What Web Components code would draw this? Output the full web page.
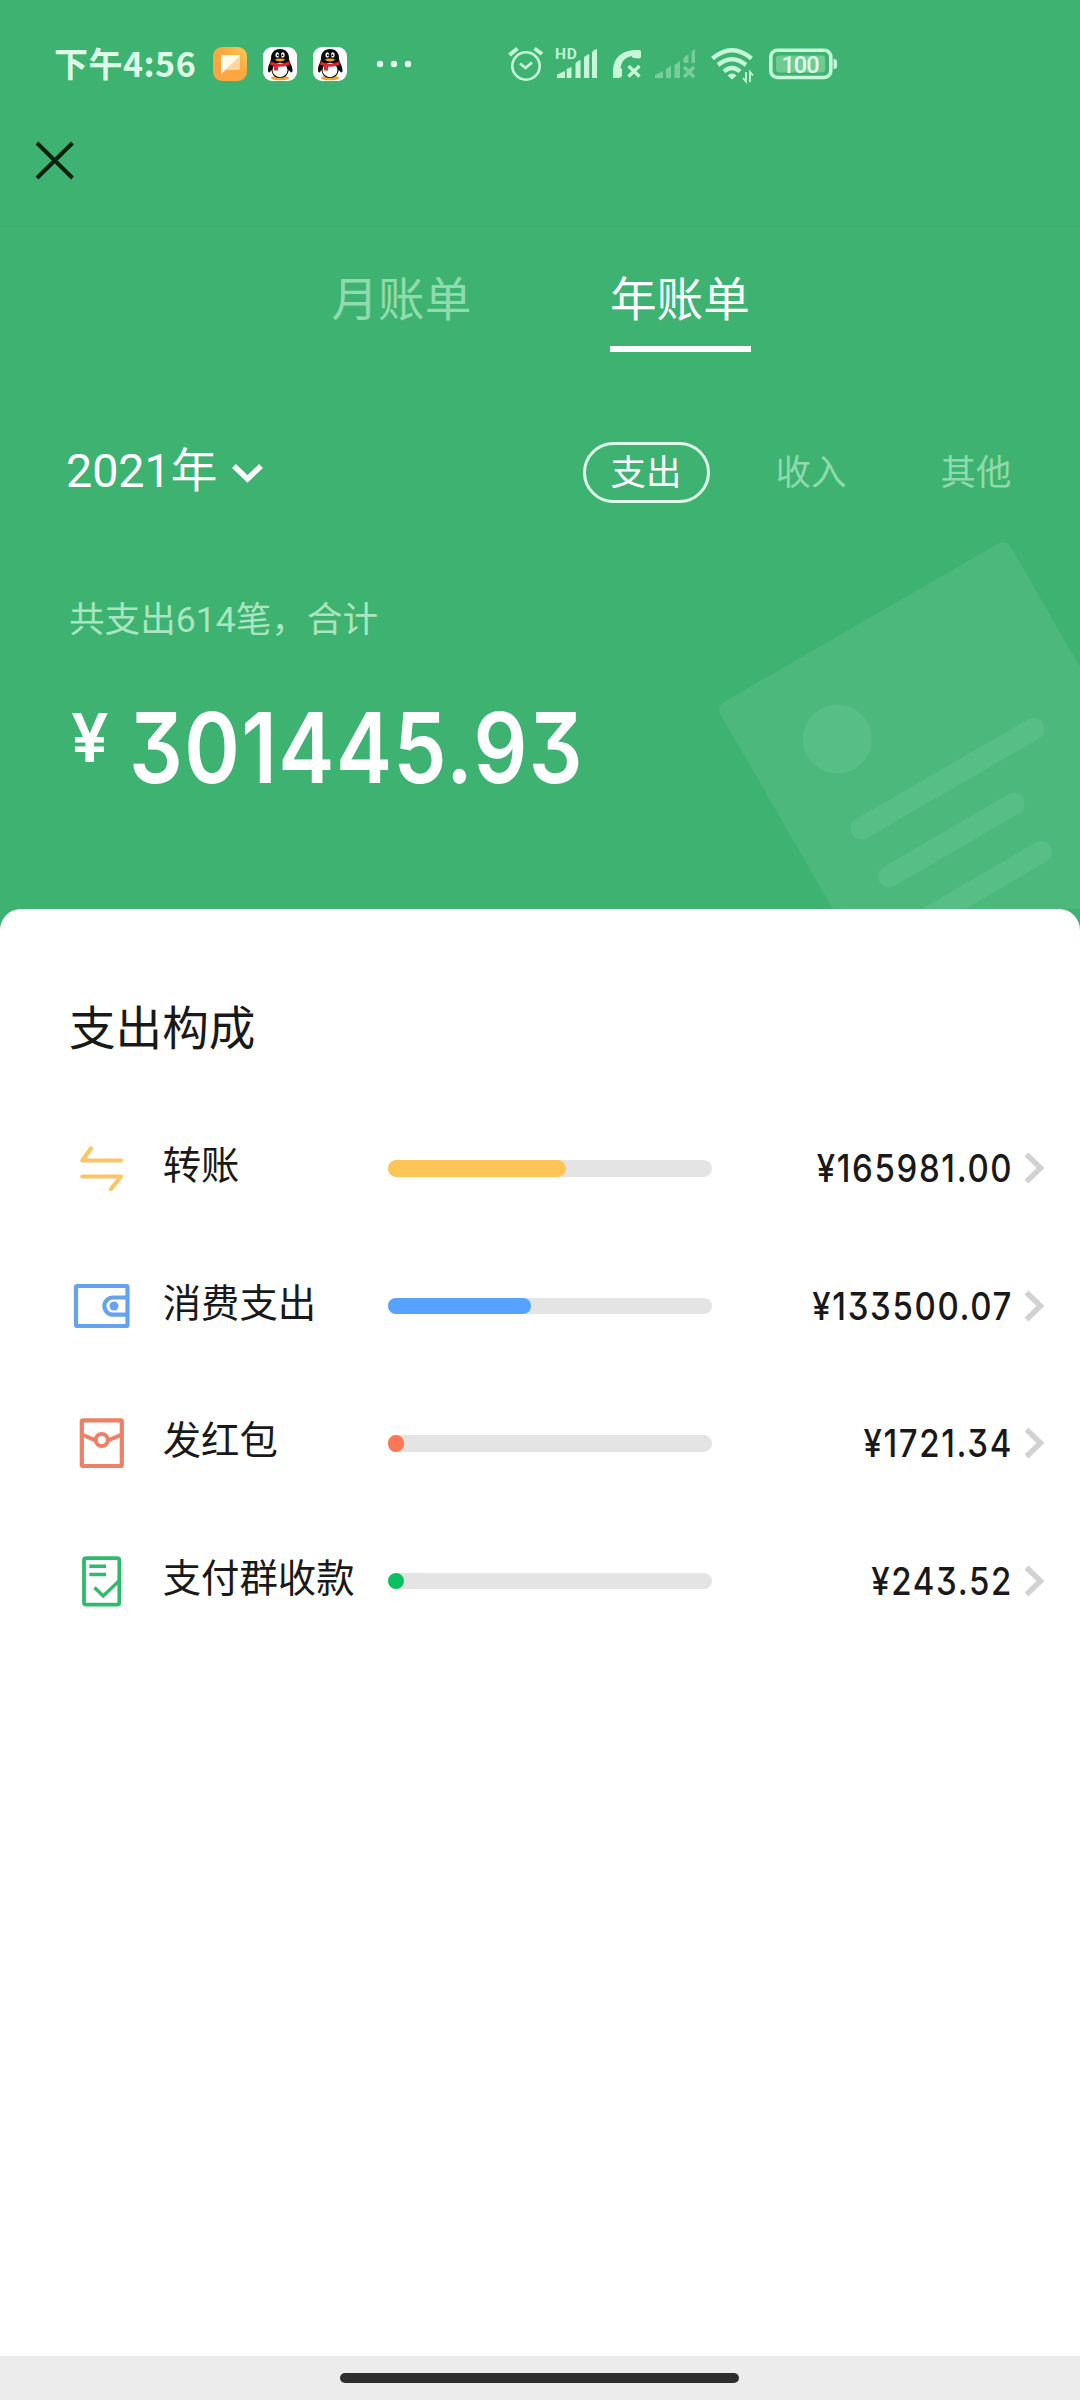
<!DOCTYPE html>
<html lang="zh-CN">
<head>
<meta charset="utf-8">
<title>年账单</title>
<style>
  html, body { margin: 0; padding: 0; }
  body { width: 1080px; height: 2400px; background: #fff; overflow: hidden;
    font-family: Roboto, "Noto Sans CJK SC", sans-serif; }
</style>
</head>
<body>
<bill-app></bill-app>

<template id="bill-app">
  <style>
    :host { display: flex; flex-direction: column; width: 1080px; height: 2400px; background: #3eb371; }
    .hero { position: relative; overflow: hidden; flex: none; height: 682px; display: flex; flex-direction: column; }
    .mark { position: absolute; left: 0; top: 0; z-index: 0; }
    .tabs { display: flex; justify-content: center; gap: 138px; padding: 41px 0 0; margin-left: 2px; }
    .filters { display: flex; align-items: center; margin-top: 90px; padding: 0 66px; height: 61px; }
    .pills { display: flex; margin-left: auto; }
    .summary { margin: 85px 0 0 69px; height: 64px; line-height: 64px; font-size: 35.600px; color: #a9e5c0; }
    .sheet { flex: 1; background: #fff; border-radius: 21px 21px 0 0; padding: 88px 35px 0 69px; }
    h2 { margin: 0 0 38.500px; font-weight: 400; font-size: 46.6px; line-height: 64px; color: #191919; }
  </style>
  <status-bar></status-bar>
  <nav-bar></nav-bar>
  <section class="hero">
    <svg class="mark" width="1080" height="682" viewBox="0 227 1080 682">
      <rect transform="translate(716 706.500) rotate(-30)" width="335" height="420" rx="9" fill="#4cb87b"/>
      <circle cx="837.3" cy="739" r="34.5" fill="#57be85"/>
      <path d="M861.5 828.5L1033.5 729M889 876.500L1013.500 804M917 924.500L1041 852" stroke="#57be85" stroke-width="22" stroke-linecap="round"/>
    </svg>
    <div class="tabs">
      <bill-tab>月账单</bill-tab>
      <bill-tab active>年账单</bill-tab>
    </div>
    <div class="filters">
      <year-picker>2021年</year-picker>
      <div class="pills">
        <type-pill active>支出</type-pill>
        <type-pill>收入</type-pill>
        <type-pill>其他</type-pill>
      </div>
    </div>
    <div class="summary">共支出614笔，合计</div>
    <total-amount>301445.93</total-amount>
  </section>
  <section class="sheet">
    <h2>支出构成</h2>
    <bill-row icon="transfer" fill="178.5" color="#fdc555">转账<span slot="amount">¥165981.00</span></bill-row>
    <bill-row icon="wallet" fill="143" color="#56a2ff">消费支出<span slot="amount">¥133500.07</span></bill-row>
    <bill-row icon="packet" fill="16.5" color="#fb7758">发红包<span slot="amount">¥1721.34</span></bill-row>
    <bill-row icon="group" fill="16.5" color="#09c160">支付群收款<span slot="amount">¥243.52</span></bill-row>
  </section>
  <home-indicator></home-indicator>
</template>

<template id="status-bar">
  <style>
    :host { display: flex; height: 84px; padding: 44px 0 0 54px; box-sizing: border-box; color: #dcfce8; }
    .time { width: 159px; height: 40px; margin-top: -1px; font: 700 34px/40px "Noto Sans CJK SC", sans-serif; letter-spacing: .5px; white-space: nowrap; }
    svg { flex: none; display: block; }
    text { font-family: Roboto, sans-serif; }
  </style>
  <div class="time">下午4:56</div>
  <svg width="50" height="40" viewBox="0 0 50 40">
    <defs><linearGradient id="o" x1="0" y1="1" x2="1" y2="0"><stop stop-color="#ffa245"/><stop offset=".6" stop-color="#fda941"/><stop offset="1" stop-color="#f6cf55"/></linearGradient></defs>
    <rect y="3" width="34" height="34" rx="9" fill="url(#o)"/>
    <path d="M8 11H27V13L8 30Z" fill="#fffbe9"/><path d="M27 12V24Q27 26 25 26H13Z" fill="#ffd49a"/>
  </svg>
  <qq-icon></qq-icon>
  <qq-icon></qq-icon>
  <svg width="145" height="40" viewBox="363 44 145 40" fill="#e4fff0"><circle cx="380" cy="64" r="3.2"/><circle cx="394" cy="64" r="3.2"/><circle cx="408" cy="64" r="3.2"/></svg>
  <svg width="47" height="40" viewBox="508 44 47 40" fill="none" stroke="#c5f7d8" stroke-width="2.6">
    <circle cx="526" cy="66" r="13.700"/><path d="M520 63.500L525.500 68L532 62.500" stroke-width="2.700"/><path d="M509.500 55L517.500 48.500M542 54L534.500 48.500" stroke-width="4"/>
  </svg>
  <svg width="58" height="40" viewBox="555 44 58 40" fill="#c5f7d8">
    <path d="M557 78V74.500L565 71V78ZM566.700 78V69L571.500 67V78ZM575.500 78V64Q575.500 62 580.500 60V78ZM584 78V58Q584 56 589.200 54V78ZM592 78V53Q592 50 597 49V78Z"/>
    <text x="555" y="59" font-size="15.500" font-weight="600" letter-spacing=".8">HD</text>
  </svg>
  <svg width="42" height="40" viewBox="613 44 42 40" fill="#c5f7d8">
    <path d="M613 78V70Q614 52 634 50H639Q641 50 641 52V56.500Q641 58.500 639 58.500L634 58Q632 58 631.500 56Q622 58 620.500 67.500L622 69V76Q621 78.500 617 78Z"/>
    <path d="M628.500 66L639.500 76.500M639.500 66L628.500 76.500" stroke="#c5f7d8" stroke-width="3.300"/>
  </svg>
  <svg width="56" height="40" viewBox="655 44 56 40" fill="#79cd9a">
    <path d="M655 78V75L663 71V78ZM666 78V69L671 66V78ZM674.500 78V65L680 61V78ZM683.500 63V58L688.500 54V63ZM691.500 63V52L695 49V63Z"/>
    <path d="M684 67L694 77M694 67L684 77" stroke="#79cd9a" stroke-width="3.500"/>
  </svg>
  <svg width="58" height="40" viewBox="711 44 58 40" fill="none" stroke="#c5f7d8" stroke-width="4.300">
    <path d="M712.500 58.500Q732 42 751.500 58.500"/><path d="M718 65Q732 53.500 746 65"/><path d="M724 71.500Q732 64.500 740 71.500"/>
    <path d="M732 79.500L727.500 75.500Q732 71.500 736.500 75.500Z" fill="#c5f7d8" stroke="none"/>
    <path d="M746 72V81.500L743 78M750 82V72L753 75.500" stroke-width="1.800"/>
  </svg>
  <svg width="70" height="40" viewBox="769 44 70 40">
    <rect x="770.800" y="50.300" width="60" height="27.200" rx="6.500" fill="none" stroke="#c5f7d8" stroke-width="3.600"/>
    <rect x="776" y="55.500" width="49" height="17" rx="3" fill="#6fca93"/>
    <path d="M833.500 59Q837 59 837 61.500V66.500Q837 69 833.500 69Z" fill="#c5f7d8"/>
    <text x="800.500" y="72.800" font-size="23.500" font-weight="500" text-anchor="middle" fill="#dcffe9" textLength="38">100</text>
  </svg>
</template>

<template id="qq-icon">
  <style>:host { display: block; width: 50px; height: 40px; } svg { display: block; }</style>
  <svg width="50" height="40" viewBox="0 0 50 40">
    <rect y="3" width="34" height="34" rx="9" fill="#fff"/>
    <ellipse cx="17" cy="34" rx="9" ry="2.300" fill="#f0a52c"/>
    <path d="M17 5C11 5 8 9 8 14C8 18 5 21 5 26Q5 29 6.500 28.500L8.500 26C9 31 12 34 17 34S25 31 25.800 26L28 28.500Q30 28 29.500 25.500C29 21 26 18 26 14C26 9 23 5 17 5Z" fill="#0b0b0d"/>
    <ellipse cx="17" cy="26" rx="7.500" ry="7.200" fill="#fff"/>
    <path d="M8 17.500Q17 22 26 17.500L27 20.500Q21 23.500 15 22.700V26.500H11V22L7 20.500Z" fill="#e3262e"/>
    <ellipse cx="14.300" cy="11" rx="1.900" ry="2.700" fill="#fff"/><ellipse cx="19.800" cy="11" rx="1.900" ry="2.700" fill="#fff"/>
    <circle cx="14.800" cy="11.300" r="1" fill="#000"/><circle cx="19.400" cy="11.300" r="1" fill="#000"/>
    <path d="M11.500 15.800Q17 13 22.500 15.800Q17 19 11.500 15.800Z" fill="#f6a61d"/>
  </svg>
</template>

<template id="nav-bar">
  <style>:host { display: flex; height: 143px; box-sizing: border-box; padding: 57px 0 0 34.500px; border-bottom: 1px solid #3cae6c; }</style>
  <svg width="40" height="40" viewBox="0 0 40 40"><path d="M2 2L37.500 37M37.500 2L2 37" stroke="#04200f" stroke-width="4"/></svg>
</template>

<template id="bill-tab">
  <style>
    :host { display: block; width: 140.500px; height: 84px; box-sizing: border-box; font-size: 46.600px; line-height: 64px; color: #90dbae; white-space: nowrap; z-index: 1; }
    :host([active]) { color: #fff; border-bottom: 6px solid #fff; }
  </style>
  <slot></slot>
</template>

<template id="year-picker">
  <style>:host { display: flex; align-items: center; gap: 14px; font-size: 46.600px; line-height: 61px; color: #fff; z-index: 1; } span { padding-bottom: 3px; }</style>
  <span><slot></slot></span>
  <svg width="34" height="24" viewBox="0 0 34 24"><path d="M3 5L16.500 18L30 5" fill="none" stroke="#fff" stroke-width="5.500"/></svg>
</template>

<template id="type-pill">
  <style>
    :host { display: block; box-sizing: border-box; width: 127px; height: 61px; margin-right: 38px; border: 3px solid transparent; border-radius: 31px;
      font-size: 35.400px; line-height: 56px; text-align: center; color: #8edaac; }
    :host([active]) { border-color: #dffcea; color: #fff; }
    :host(:last-child) { margin-right: -25.500px; }
  </style>
  <slot></slot>
</template>

<template id="total-amount">
  <style>
    :host { display: flex; align-items: flex-start; margin: 47px 0 0 71px; color: #fff; font-family: Inter, sans-serif; font-weight: 600; font-feature-settings: "cv09" 1; z-index: 1; }
    span { transform: scaleX(.86); transform-origin: left; white-space: nowrap; }
    .sign { font-size: 68px; line-height: 68px; width: 57.500px; margin-top: 4px; font-weight: 600; transform: scaleX(.98); }
    .num { font-size: 98px; line-height: 98px; letter-spacing: 1.700px; }
  </style>
  <span class="sign">¥</span><span class="num"><slot></slot></span>
</template>

<template id="bill-row">
  <style>
    :host { display: flex; align-items: center; height: 137.500px; color: #191919; }
    .icon { width: 60px; height: 60px; margin-left: 2.700px; flex: none; }
    .label { width: 225px; margin-left: 31px; font-size: 38.400px; line-height: 52px; padding-bottom: 4px; white-space: nowrap; }
    .bar { width: 324px; height: 16.500px; border-radius: 9px; background: #e4e4e4; flex: none; }
    .fill { height: 100%; border-radius: 9px; }
    .amount { margin-left: auto; padding-top: 2px; font: 500 37.500px/50px Inter, sans-serif; font-feature-settings: "cv09" 1; letter-spacing: 1.850px; white-space: nowrap; transform: scaleX(.88); transform-origin: right; }
    .chev { margin: 0 -1px 0 11px; flex: none; }
  </style>
  <svg class="icon" viewBox="0 0 60 60" fill="none"></svg>
  <div class="label"><slot></slot></div>
  <div class="bar"><div class="fill"></div></div>
  <div class="amount"><slot name="amount"></slot></div>
  <svg class="chev" width="22" height="34" viewBox="0 0 22 34"><path d="M2.500 3.500L16.500 17L2.500 30.500" fill="none" stroke="#d2d2d2" stroke-width="5.500"/></svg>
</template>

<template id="home-indicator">
  <style>
    :host { display: flex; justify-content: center; align-items: center; height: 44px; flex: none; background: #ececec; }
    i { display: block; width: 399px; height: 10px; margin-right: 1px; border-radius: 5px; background: #2e2e2e; }
  </style>
  <i></i>
</template>

<script>
  const ICONS = {
    transfer: '<path d="M19 10.500L10.300 22.500H49M10.300 38.500H49L39 51" stroke="#f9c565" stroke-width="4.200" stroke-linecap="round" stroke-linejoin="round"/>',
    wallet: '<rect x="4" y="10" width="51.500" height="40" rx="1" stroke="#65a3ef" stroke-width="4.200"/><path d="M55 21.500H41a8.600 8.600 0 0 0 0 17.200H55" stroke="#65a3ef" stroke-width="4.200"/><circle cx="42" cy="30" r="4.500" fill="#65a3ef"/>',
    packet: '<rect x="9.800" y="7.300" width="40" height="45.700" rx="1" stroke="#ee8067" stroke-width="4.200"/><circle cx="29.800" cy="27" r="6" stroke="#ee8067" stroke-width="4"/><path d="M10 21.500L23.500 27.300M50 21.500L36 27.300" stroke="#ee8067" stroke-width="4"/>',
    group: '<rect x="12" y="7.200" width="35.300" height="46.400" rx="2" stroke="#2fbb6c" stroke-width="3.800"/><path d="M17.300 15.300H34M17.300 23.500H34M22.500 36.500L31.200 45L47 30" stroke="#2fbb6c" stroke-width="3.400"/>'
  };

  class TemplateElement extends HTMLElement {
    constructor() {
      super();
      this.attachShadow({ mode: 'open' }).append(
        document.getElementById(this.localName).content.cloneNode(true));
    }
  }

  class BillRow extends TemplateElement {
    connectedCallback() {
      const root = this.shadowRoot;
      root.querySelector('.icon').innerHTML = ICONS[this.getAttribute('icon')];
      const fill = root.querySelector('.fill');
      fill.style.width = this.getAttribute('fill') + 'px';
      fill.style.background = this.getAttribute('color');
    }
  }

  customElements.define('bill-row', BillRow);
  for (const name of ['qq-icon', 'status-bar', 'nav-bar', 'bill-tab', 'year-picker', 'type-pill', 'total-amount', 'home-indicator', 'bill-app'])
    customElements.define(name, class extends TemplateElement {});
</script>
</body>
</html>
